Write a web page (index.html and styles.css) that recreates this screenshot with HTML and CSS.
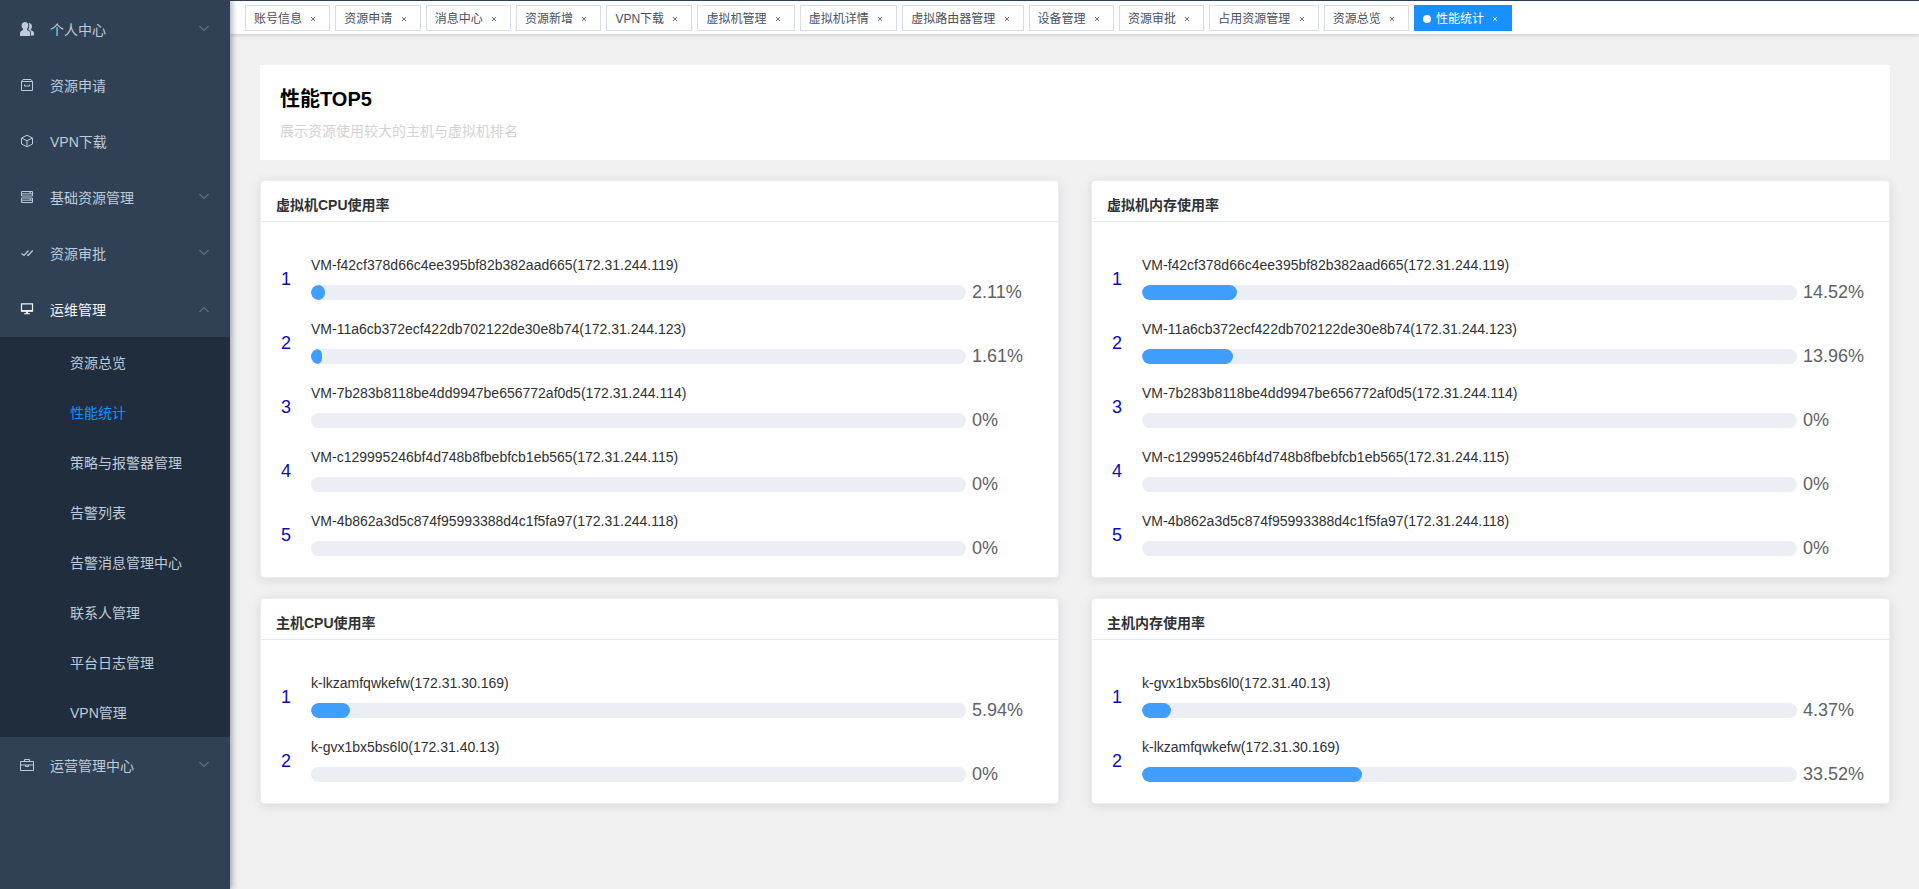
FILE: index.html
```html
<!DOCTYPE html>
<html lang="zh-CN">
<head>
<meta charset="utf-8">
<title>性能统计</title>
<link rel="stylesheet" href="styles.css">
</head>
<body>
<svg class="sprite" aria-hidden="true">
  <symbol id="chevron" viewBox="0 0 12 12"><path d="M1.500 3 6 7.500l4.500-4.500" fill="none" stroke="currentColor"/></symbol>
  <symbol id="cross" viewBox="0 0 8 8"><path d="M2 2l4 4M6 2 2 6" fill="none" stroke="currentColor" stroke-width=".8"/></symbol>
</svg>
<div class="app">
  <nav class="sidebar">
    <ul class="menu">
      <li><button class="item" type="button">
        <svg class="icon" viewBox="0 0 14 14"><path fill="currentColor" d="M5 0c2 0 3.400 1.500 3.400 3.500 0 1.500-.6 2.800-1.400 3.500v1c1.700.6 3.200 1.400 3.200 3.200V14H0v-2.800C0 9.400 1.400 8.600 3.100 8V7C2.200 6.300 1.600 5 1.600 3.500 1.600 1.500 3 0 5 0zM8.600 1c2 0 3.400 1.300 3.400 3.200 0 1.400-.5 2.400-1.200 3.100v.9c1.800.6 3.200 1.400 3.200 3V13.500h-3V11c0-1.600-1-2.800-2.800-3.600.7-.9 1.100-2.200 1.100-3.700C9.300 2.600 9 1.700 8.600 1z"/></svg>
        <span>个人中心</span><svg class="arrow"><use href="#chevron"/></svg></button></li>
      <li><a class="item" href="#">
        <svg class="icon" viewBox="0 0 14 14"><path fill="none" stroke="currentColor" d="M1.500 3.500h11v9h-11zM1.500 3.500l1.500-2h8l1.500 2M4.500 6.500v1.500h5V6.500"/></svg>
        <span>资源申请</span></a></li>
      <li><a class="item" href="#">
        <svg class="icon" viewBox="0 0 14 14"><path fill="none" stroke="currentColor" stroke-linejoin="round" d="M7 1.200 12.500 4v6L7 12.800 1.500 10V4zM2 4.200l5 2.600 5-2.600M7 6.800v5.700"/></svg>
        <span>VPN下载</span></a></li>
      <li><button class="item" type="button">
        <svg class="icon" viewBox="0 0 14 14"><path fill="none" stroke="currentColor" d="M1.500 1.500h11v4.500h-11zM1.500 8h11v4.500h-11zM1.500 3.800h11M1.500 10.200h11M9.500 2.700h1.500M9.500 9.200h1.500"/></svg>
        <span>基础资源管理</span><svg class="arrow"><use href="#chevron"/></svg></button></li>
      <li><button class="item" type="button">
        <svg class="icon" viewBox="0 0 14 14"><path fill="none" stroke="currentColor" stroke-width="1.200" d="M1.500 7.500 4 9.500l4.500-5M7 8.800l1.200.7 4.500-5"/></svg>
        <span>资源审批</span><svg class="arrow"><use href="#chevron"/></svg></button></li>
      <li><button class="item open" type="button" aria-expanded="true">
        <svg class="icon" viewBox="0 0 14 14"><path fill="none" stroke="currentColor" stroke-width="1.200" d="M1.500 1.800h11v7.400h-11z"/><path fill="currentColor" d="M1.500 8h11v1.500h-11zM6 9.500h2v1.700h2v1H4v-1h2z"/></svg>
        <span>运维管理</span><svg class="arrow"><use href="#chevron"/></svg></button>
        <ul class="submenu">
          <li><a href="#">资源总览</a></li>
          <li><a class="active" href="#" aria-current="page">性能统计</a></li>
          <li><a href="#">策略与报警器管理</a></li>
          <li><a href="#">告警列表</a></li>
          <li><a href="#">告警消息管理中心</a></li>
          <li><a href="#">联系人管理</a></li>
          <li><a href="#">平台日志管理</a></li>
          <li><a href="#">VPN管理</a></li>
        </ul></li>
      <li><button class="item" type="button">
        <svg class="icon" viewBox="0 0 14 14"><path fill="none" stroke="currentColor" d="M.5 3.500h13v9H.5zM4.500 3.500v-2h5v2M.5 7h5M8.500 7h5M5.500 7h3v1.500h-3z"/></svg>
        <span>运营管理中心</span><svg class="arrow"><use href="#chevron"/></svg></button></li>
    </ul>
  </nav>
  <div class="main">
    <div class="tags" id="tags"></div>
    <main class="content">
      <header class="intro">
        <h1>性能TOP5</h1>
        <p>展示资源使用较大的主机与虚拟机排名</p>
      </header>
      <div class="cards" id="cards"></div>
    </main>
  </div>
</div>
<script src="app.js"></script>
</body>
</html>
```
FILE: app.js
```js
const tags = ['账号信息', '资源申请', '消息中心', '资源新增', 'VPN下载', '虚拟机管理', '虚拟机详情',
  '虚拟路由器管理', '设备管理', '资源审批', '占用资源管理', '资源总览', '性能统计'];
const current = '性能统计';

document.getElementById('tags').innerHTML = tags.map(name => `
  <div class="tag${name === current ? ' current' : ''}">
    <a href="#">${name}</a>
    <button type="button" aria-label="关闭${name}"><svg><use href="#cross"/></svg></button>
  </div>`).join('');

const vms = [
  'VM-f42cf378d66c4ee395bf82b382aad665(172.31.244.119)',
  'VM-11a6cb372ecf422db702122de30e8b74(172.31.244.123)',
  'VM-7b283b8118be4dd9947be656772af0d5(172.31.244.114)',
  'VM-c129995246bf4d748b8fbebfcb1eb565(172.31.244.115)',
  'VM-4b862a3d5c874f95993388d4c1f5fa97(172.31.244.118)'
];
const hostA = 'k-lkzamfqwkefw(172.31.30.169)';
const hostB = 'k-gvx1bx5bs6l0(172.31.40.13)';

const cards = [
  { title: '虚拟机CPU使用率', names: vms, values: [2.11, 1.61, 0, 0, 0] },
  { title: '虚拟机内存使用率', names: vms, values: [14.52, 13.96, 0, 0, 0] },
  { title: '主机CPU使用率', names: [hostA, hostB], values: [5.94, 0] },
  { title: '主机内存使用率', names: [hostB, hostA], values: [4.37, 33.52] }
];

document.getElementById('cards').innerHTML = cards.map(card => `
  <section class="card">
    <h2>${card.title}</h2>
    <ol class="ranking">${card.names.map((name, i) => `
      <li>
        <span class="rank">${i + 1}</span>
        <div class="entry">
          <div class="name">${name}</div>
          <div class="usage">
            <div class="track" role="progressbar" aria-label="${name}" aria-valuenow="${card.values[i]}">
              <div class="fill" style="width:${card.values[i]}%"></div>
            </div>
            <span class="value">${card.values[i]}%</span>
          </div>
        </div>
      </li>`).join('')}
    </ol>
  </section>`).join('');
```
FILE: styles.css
```css
* { box-sizing: border-box; }

body {
  margin: 0;
  background: #f1f1f1;
  color: #303133;
  font: 14px/20px "Liberation Sans", "Noto Sans CJK SC", sans-serif;
}

h1, h2, p, ul, ol { margin: 0; padding: 0; }
ul, ol { list-style: none; }
a { color: inherit; text-decoration: none; }
button {
  border: 0;
  padding: 0;
  background: none;
  color: inherit;
  font: inherit;
  text-align: left;
  cursor: pointer;
}
.sprite { display: none; }

.app {
  display: flex;
  min-height: 100vh;
}

/* Sidebar */
.sidebar {
  position: relative;
  z-index: 1;
  flex: 0 0 230px;
  padding-top: 1px;
  background: #304156;
  color: #bfcbd9;
  box-shadow: 2px 0 6px rgba(0, 21, 41, .35);
}
.item {
  display: flex;
  align-items: center;
  width: 100%;
  height: 56px;
  padding: 0 20px;
}
.item span {
  flex: 1;
  padding-top: 2px;
}
.item.open { color: #f4f4f5; }
.icon {
  width: 14px;
  height: 14px;
  margin-right: 16px;
}
.arrow {
  width: 12px;
  height: 12px;
  color: #7f8a99;
}
.item.open .arrow { transform: rotate(180deg); }
.submenu { background: #1f2d3d; }
.submenu a {
  display: block;
  height: 50px;
  padding: 16px 0 0 70px;
}
.submenu .active { color: #1890ff; }

/* Open page tags */
.main {
  flex: 1;
  min-width: 0;
  border-top: 1px solid #304156;
}
.tags {
  display: flex;
  gap: 5px;
  padding: 4px 15px 3px;
  border-bottom: 1px solid #d8dce5;
  background: #fff;
  box-shadow: 0 1px 3px rgba(0, 0, 0, .12);
}
.tag {
  display: flex;
  align-items: center;
  height: 26px;
  padding: 2px 8px 0;
  border: 1px solid #d8dce5;
  background: #fff;
  color: #495060;
  font-size: 12px;
  white-space: nowrap;
}
.tag a::after {
  content: " ";
  white-space: pre;
}
.tag button {
  display: flex;
  align-items: center;
  justify-content: center;
  width: 16px;
  height: 16px;
}
.tag svg {
  width: 8px;
  height: 8px;
}
.tag.current {
  border-color: #1890ff;
  background: #1890ff;
  color: #fff;
}
.tag.current::before {
  content: "";
  width: 8px;
  height: 8px;
  margin-right: 5px;
  border-radius: 50%;
  background: #fff;
}

/* Page content */
.content { padding: 30px 29px 30px 30px; }
.intro {
  margin-bottom: 20px;
  padding: 20px 20px 19px;
  background: #fff;
}
.intro h1 {
  margin-bottom: 8px;
  color: #000;
  font-size: 20px;
  line-height: 28px;
}
.intro p { color: #d3d3d3; }

.cards {
  display: grid;
  grid-template-columns: 1fr 1fr;
  gap: 20px 32px;
}
.card {
  border: 1px solid #ebeef5;
  border-radius: 4px;
  background: #fff;
  box-shadow: 0 2px 12px rgba(0, 0, 0, .1);
}
.card h2 {
  padding: 15px 15px 7px;
  border-bottom: 1px solid #e6ebf0;
  font-size: 14px;
  line-height: 18px;
}
.ranking {
  display: grid;
  gap: 19px;
  padding: 33px 20px 21px;
}
.ranking li {
  display: flex;
  align-items: center;
}
.rank {
  flex: 0 0 30px;
  padding-top: 2px;
  color: #0c0cb4;
  font-size: 18px;
}
.entry { flex: 1; }
.name { margin-bottom: 10px; }
.usage {
  display: flex;
  align-items: center;
  gap: 6px;
}
.track {
  flex: 1;
  height: 15px;
  overflow: hidden;
  border-radius: 8px;
  background: #ebeef5;
}
.fill {
  height: 100%;
  border-radius: 8px;
  background: #409eff;
}
.value {
  width: 66px;
  color: #606266;
  font-size: 18px;
  line-height: 15px;
}
```
